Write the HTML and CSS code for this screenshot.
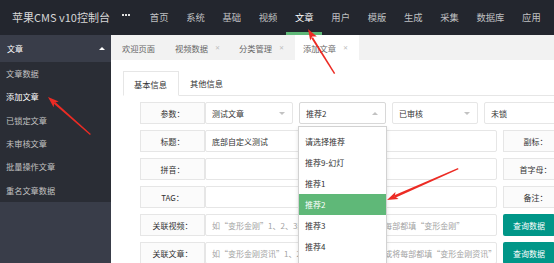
FILE: index.html
```html
<!DOCTYPE html>
<html lang="zh-CN">
<head>
<meta charset="utf-8">
<title>苹果CMS v10控制台</title>
<link rel="stylesheet" href="styles.css">
</head>
<body>
<div class="app">
  <header class="topbar">
    <div class="logo">苹果CMS v10控制台</div>
    <div class="more"><i></i><i></i><i></i></div>
    <nav class="topnav">
      <a>首页</a><a>系统</a><a>基础</a><a>视频</a><a class="on">文章</a><a>用户</a><a>模版</a><a>生成</a><a>采集</a><a>数据库</a><a>应用</a>
    </nav>
  </header>
  <div class="main">
    <aside class="side">
      <div class="side-head"><span>文章</span><span class="caret-up"></span></div>
      <ul class="side-list">
        <li>文章数据</li>
        <li class="on">添加文章</li>
        <li>已锁定文章</li>
        <li>未审核文章</li>
        <li>批量操作文章</li>
        <li>重名文章数据</li>
      </ul>
    </aside>
    <section class="page">
      <div class="tabbar">
        <div class="tab first">欢迎页面</div>
        <div class="tab">视频数据<span class="x">✕</span></div>
        <div class="tab">分类管理<span class="x">✕</span></div>
        <div class="tab on">添加文章<span class="x">✕</span></div>
      </div>
      <div class="content">
        <div class="subtabs">
          <div class="subtab on">基本信息</div>
          <div class="subtab">其他信息</div>
        </div>
        <div class="form">
          <div class="row">
            <div class="lbl">参数：</div>
            <div class="inp sel w88"><span>测试文章</span><span class="tri-down"></span></div>
            <div class="inp sel w87 ml6 open"><span>推荐2</span><span class="tri-up"></span>
              <div class="dl">
                <div class="dd">请选择推荐</div>
                <div class="dd">推荐9-幻灯</div>
                <div class="dd">推荐1</div>
                <div class="dd on">推荐2</div>
                <div class="dd">推荐3</div>
                <div class="dd">推荐4</div>
              </div>
            </div>
            <div class="inp sel w86 ml6"><span>已审核</span><span class="tri-down"></span></div>
            <div class="inp sel w90 ml6"><span>未锁</span><span class="tri-down"></span></div>
          </div>
          <div class="row">
            <div class="lbl">标题：</div>
            <div class="inp txt w292">底部自定义测试</div>
            <div class="lbl ml6">副标：</div>
          </div>
          <div class="row">
            <div class="lbl">拼音：</div>
            <div class="inp txt w292"></div>
            <div class="lbl ml6">首字母：</div>
          </div>
          <div class="row">
            <div class="lbl">TAG：</div>
            <div class="inp txt w292"></div>
            <div class="lbl ml6">备注：</div>
          </div>
          <div class="row">
            <div class="lbl">关联视频：</div>
            <div class="inp txt w292 ph">如“变形金刚”1、2、3部ID分别为11,12,13或将每部都填“变形金刚”</div>
            <div class="btn ml6">查询数据</div>
          </div>
          <div class="row">
            <div class="lbl">关联文章：</div>
            <div class="inp txt w292 ph">如“变形金刚资讯”1、2、3部ID分别为11,12,13或将每部都填“变形金刚资讯”</div>
            <div class="btn ml6">查询数据</div>
          </div>
        </div>
      </div>
    </section>
  </div>
  <svg class="arrows" width="554" height="263" viewBox="0 0 554 263" xmlns="http://www.w3.org/2000/svg">
    <g fill="#ec2b24" stroke="none">
      <polygon points="334,74 335.2,73.3 313,37.2 311.3,38.2"/>
      <polygon points="308,29 316.8,36.6 312.25,36.4 310.2,40.4"/>
      <polygon points="90,135 90.8,134.1 55.2,102 53.6,103.6"/>
      <polygon points="48,97 58.7,101.6 54.3,102.7 53.6,107.2"/>
      <polygon points="458,168 458.5,169.2 395.3,197.8 394.3,195.3"/>
      <polygon points="387,200 398.6,198.9 394.75,196.5 395.5,192"/>
    </g>
  </svg>
</div>
</body>
</html>
```

FILE: styles.css
```css
html, body {
  margin: 0;
  padding: 0;
  width: 554px;
  height: 263px;
  overflow: hidden;
  background: #fff;
  font-family: "Noto Sans CJK SC", "Noto Sans", sans-serif;
}

.app {
  position: relative;
  width: 554px;
  height: 263px;
  overflow: hidden;
}

/* top bar */
.topbar {
  height: 35px;
  background: #23262e;
  display: flex;
  align-items: stretch;
}
.logo {
  width: 111px;
  flex: none;
  box-sizing: border-box;
  padding-left: 12px;
  line-height: 35px;
  font-size: 11px;
  color: #d6d6d6;
  white-space: nowrap;
}
.more {
  width: 30px;
  flex: none;
  display: flex;
  align-items: center;
  justify-content: center;
  gap: 1px;
  padding-bottom: 5px;
  box-sizing: border-box;
}
.more i {
  width: 2px;
  height: 2px;
  background: #e0e0e0;
}
.topnav {
  display: flex;
}
.topnav a {
  padding: 0 8.85px;
  line-height: 35px;
  font-size: 9.3px;
  color: rgba(255, 255, 255, 0.72);
  white-space: nowrap;
}
.topnav a.on {
  color: #fff;
  box-shadow: inset 0 -3px 0 #5fb878;
}

/* main */
.main {
  display: flex;
  height: 228px;
}
.side {
  width: 111px;
  flex: none;
  background: #393d49;
}
.side-head {
  height: 27px;
  display: flex;
  align-items: center;
  justify-content: space-between;
  padding: 0 6px 0 7px;
  color: #fff;
  font-size: 8px;
}
.caret-up {
  width: 0;
  height: 0;
  border-left: 3px solid transparent;
  border-right: 3px solid transparent;
  border-bottom: 3px solid #fff;
}
.side-list {
  list-style: none;
  margin: 0;
  padding: 0;
  background: #2a2d35;
}
.side-list li {
  height: 23.33px;
  line-height: 23.33px;
  padding-left: 6px;
  font-size: 8.2px;
  color: #c2c2c2;
  white-space: nowrap;
}
.side-list li.on {
  color: #fff;
}

/* page */
.page {
  flex: 1;
  min-width: 0;
  background: #fff;
}
.tabbar {
  height: 25px;
  background: #f2f2f2;
  display: flex;
  padding-left: 3px;
}
.tab {
  display: flex;
  align-items: center;
  padding: 0 11px 0 8px;
  font-size: 8.25px;
  color: #666;
  white-space: nowrap;
}
.tab.first {
  padding-right: 12px;
}
.tab .x {
  margin-left: 7px;
  width: 5px;
  font-size: 6px;
  color: #bdbdbd;
}
.tab.on {
  background: #fff;
}

.content {
  padding: 11px 0 0 12px;
}
.subtabs {
  display: flex;
  height: 24px;
  border-bottom: 1px solid #e6e6e6;
}
.subtab {
  padding: 0 11px;
  display: flex;
  align-items: center;
  font-size: 8.25px;
  color: #333;
  white-space: nowrap;
}
.subtab.on {
  padding: 0 11px 0 10px;
  border: 1px solid #e6e6e6;
  border-bottom-color: #fff;
  background: #fff;
  margin-bottom: -1px;
}

.form {
  padding: 6px 0 0 17px;
}
.row {
  display: flex;
  height: 22px;
  margin-bottom: 6px;
}
.lbl {
  width: 65px;
  flex: none;
  box-sizing: border-box;
  border: 1px solid #e6e6e6;
  background: #fbfbfb;
  font-size: 8px;
  color: #333;
  display: flex;
  align-items: center;
  justify-content: center;
  white-space: nowrap;
}
.inp {
  box-sizing: border-box;
  flex: none;
  border: 1px solid #e6e6e6;
  border-radius: 2px;
  padding-left: 6px;
  font-size: 8px;
  color: #333;
  display: flex;
  align-items: center;
  white-space: nowrap;
  background: #fff;
}
.txt {
  overflow: hidden;
}
.ph {
  color: #a3a3a3;
}
.sel {
  justify-content: space-between;
  padding-right: 7px;
  position: relative;
}
.sel.open {
  border-color: #d8d8d8;
}
.w86 { width: 86px; }
.w87 { width: 87px; }
.w88 { width: 88px; }
.w90 { width: 90px; }
.w292 { width: 292px; }
.ml6 { margin-left: 6px; }

.tri-down {
  width: 0;
  height: 0;
  border-left: 3px solid transparent;
  border-right: 3px solid transparent;
  border-top: 3px solid #c2c2c2;
}
.tri-up {
  width: 0;
  height: 0;
  border-left: 3px solid transparent;
  border-right: 3px solid transparent;
  border-bottom: 3px solid #c2c2c2;
}

.btn {
  flex: none;
  background: #009688;
  color: #fff;
  font-size: 8px;
  padding: 0 10px;
  display: flex;
  align-items: center;
  border-radius: 2px;
  white-space: nowrap;
}

.dl {
  position: absolute;
  left: -2px;
  top: calc(100% + 3px);
  width: 89px;
  box-sizing: border-box;
  background: #fff;
  border: 1px solid #d2d2d2;
  box-shadow: 0 2px 4px rgba(0, 0, 0, 0.12);
  padding: 4px 0 30px;
  z-index: 5;
}
.dd {
  height: 21px;
  line-height: 21px;
  padding-left: 6px;
  font-size: 8px;
  color: #333;
  white-space: nowrap;
}
.dd.on {
  background: #5fb878;
  color: #fff;
}

.arrows {
  position: absolute;
  left: 0;
  top: 0;
  z-index: 10;
  pointer-events: none;
}
```
